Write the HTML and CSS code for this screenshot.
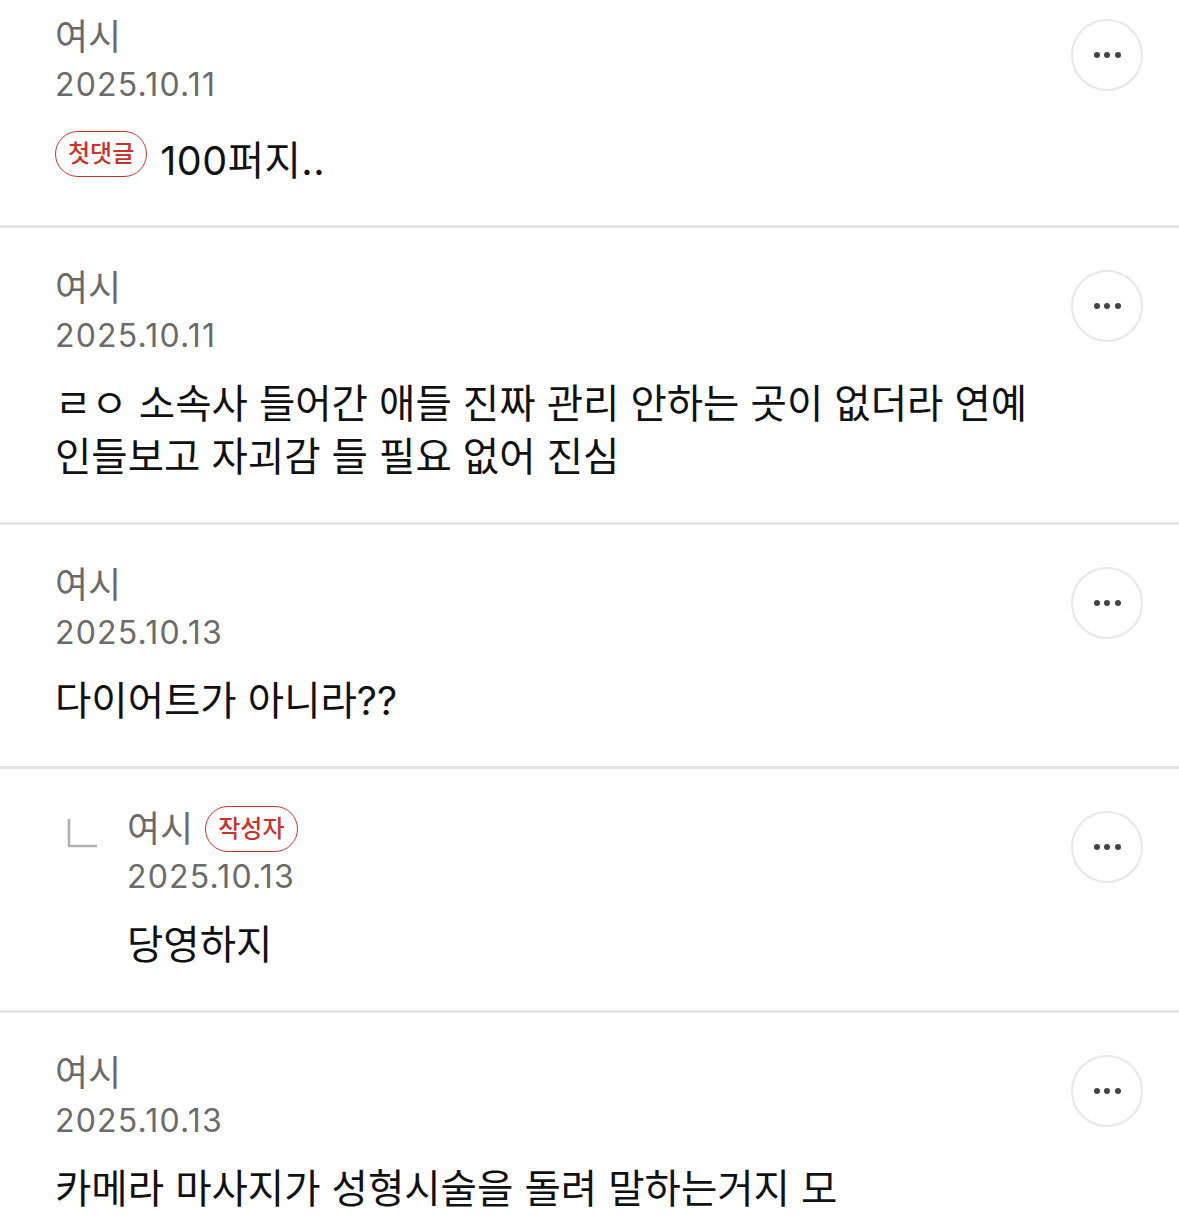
FILE: index.html
```html
<!DOCTYPE html>
<html lang="ko">
<head>
  <meta charset="UTF-8" />
  <title>댓글</title>
  <link rel="stylesheet" href="styles.css">
</head>
<body>

  <div class="comments">

    <!-- comment -->
    <div class="comment first">
      <div class="body">
        <div class="name">여시</div>
        <div class="date">2025.10.11</div>
        <div class="text with-badge"><span class="badge">첫댓글</span><span class="badge-text">100퍼지..</span></div>
      </div>
      <button class="more"><span></span><span></span><span></span></button>
    </div>

    <div class="comment">
      <div class="body">
        <div class="name">여시</div>
        <div class="date">2025.10.11</div>
        <div class="text">ㄹㅇ 소속사 들어간 애들 진짜 관리 안하는 곳이 없더라 연예인들보고 자괴감 들 필요 없어 진심</div>
      </div>
      <button class="more"><span></span><span></span><span></span></button>
    </div>

    <div class="comment">
      <div class="body">
        <div class="name">여시</div>
        <div class="date">2025.10.13</div>
        <div class="text">다이어트가 아니라??</div>
      </div>
      <button class="more"><span></span><span></span><span></span></button>
    </div>

    <!-- reply -->
    <div class="comment reply">
      <svg class="reply-mark" width="34" height="32" viewBox="0 0 34 32">
        <path d="M3 2 V29 H31" fill="none" stroke="#b0b0b0" stroke-width="2.5"/>
      </svg>
      <div class="body">
        <div class="name">여시<span class="badge small">작성자</span></div>
        <div class="date">2025.10.13</div>
        <div class="text">당영하지</div>
      </div>
      <button class="more"><span></span><span></span><span></span></button>
    </div>

    <div class="comment">
      <div class="body">
        <div class="name">여시</div>
        <div class="date">2025.10.13</div>
        <div class="text">카메라 마사지가 성형시술을 돌려 말하는거지 모</div>
      </div>
      <button class="more"><span></span><span></span><span></span></button>
    </div>

  </div>

</body>
</html>
```

FILE: styles.css
```css
* { margin: 0; padding: 0; box-sizing: border-box; }

html, body {
  background: #fff;
  font-family: 'Inter', 'Noto Sans CJK KR', sans-serif;
  color: #111;
  overflow: hidden;
}

.comment {
  display: flex;
  align-items: flex-start;
  padding: 36px 36px 38px 55px;
  border-bottom: 3px solid #e6e6e6;
}

.comment.first { padding-top: 13px; padding-bottom: 37px; }

.body {
  flex: 1;
  min-width: 0;
  padding-right: 30px;
}

.name {
  display: flex;
  align-items: center;
  font-size: 36px;
  line-height: 48px;
  color: #6b6b6b;
}

.date {
  font-size: 32px;
  line-height: 48px;
  letter-spacing: 1.2px;
  color: #6b6b6b;
}

.text {
  margin-top: 18px;
  font-size: 39.5px;
  line-height: 53px;
  color: #111;
}

.text.with-badge {
  display: flex;
  align-items: flex-start;
  margin-top: 22px;
}

.badge-text {
  padding-top: 4px;
  letter-spacing: 0.5px;
}

.badge {
  display: inline-flex;
  align-items: center;
  justify-content: center;
  height: 46px;
  padding: 0 12px;
  margin-right: 13px;
  border: 1.5px solid #c8332e;
  border-radius: 23px;
  color: #c8332e;
  font-size: 24px;
  font-weight: 500;
  line-height: 1;
  letter-spacing: 0;
}

.badge.small {
  margin: 0 0 0 12px;
}

.reply { padding-left: 66px; }

.reply-mark {
  flex: none;
  margin: 12px 27px 0 0;
}

.more {
  flex: none;
  width: 72px;
  height: 72px;
  margin-top: 6px;
  border: 2px solid #e8e8e8;
  border-radius: 50%;
  background: #fff;
  display: flex;
  align-items: center;
  justify-content: center;
  gap: 4.5px;
}

.more span {
  width: 6px;
  height: 6px;
  border-radius: 50%;
  background: #444;
}
```
